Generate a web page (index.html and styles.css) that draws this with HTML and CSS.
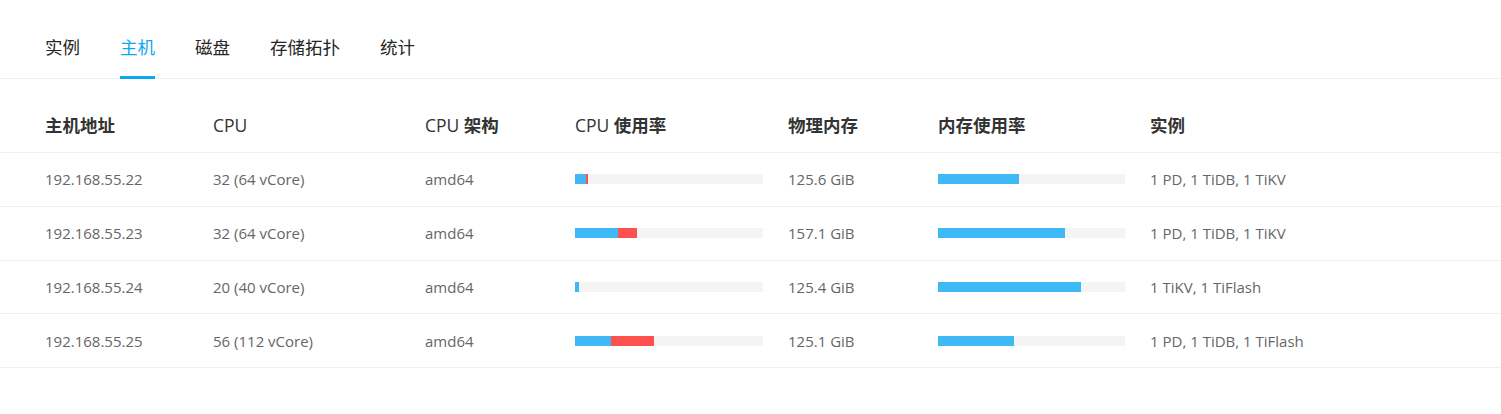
FILE: index.html
```html
<!DOCTYPE html>
<html lang="zh-CN">
<head>
<meta charset="utf-8">
<title>主机</title>
<link rel="stylesheet" href="styles.css">
</head>
<body>
<div class="tabs">
  <div class="tab">实例</div>
  <div class="tab active">主机</div>
  <div class="tab">磁盘</div>
  <div class="tab">存储拓扑</div>
  <div class="tab">统计</div>
</div>
<div class="table">
  <div class="row head">
    <div class="cell"><b>主机地址</b></div>
    <div class="cell">CPU</div>
    <div class="cell">CPU <b>架构</b></div>
    <div class="cell">CPU <b>使用率</b></div>
    <div class="cell"><b>物理内存</b></div>
    <div class="cell"><b>内存使用率</b></div>
    <div class="cell"><b>实例</b></div>
  </div>
  <div class="row">
    <div class="cell">192.168.55.22</div>
    <div class="cell">32 (64 vCore)</div>
    <div class="cell">amd64</div>
    <div class="cell"><div class="bar"><span class="blue" style="width:11px"></span><span class="red" style="width:2px"></span></div></div>
    <div class="cell">125.6 GiB</div>
    <div class="cell"><div class="bar mem"><span class="blue" style="width:81px"></span></div></div>
    <div class="cell">1 PD, 1 TiDB, 1 TiKV</div>
  </div>
  <div class="row">
    <div class="cell">192.168.55.23</div>
    <div class="cell">32 (64 vCore)</div>
    <div class="cell">amd64</div>
    <div class="cell"><div class="bar"><span class="blue" style="width:43px"></span><span class="red" style="width:19px"></span></div></div>
    <div class="cell">157.1 GiB</div>
    <div class="cell"><div class="bar mem"><span class="blue" style="width:127px"></span></div></div>
    <div class="cell">1 PD, 1 TiDB, 1 TiKV</div>
  </div>
  <div class="row">
    <div class="cell">192.168.55.24</div>
    <div class="cell">20 (40 vCore)</div>
    <div class="cell">amd64</div>
    <div class="cell"><div class="bar"><span class="blue" style="width:4px"></span></div></div>
    <div class="cell">125.4 GiB</div>
    <div class="cell"><div class="bar mem"><span class="blue" style="width:143px"></span></div></div>
    <div class="cell">1 TiKV, 1 TiFlash</div>
  </div>
  <div class="row">
    <div class="cell">192.168.55.25</div>
    <div class="cell">56 (112 vCore)</div>
    <div class="cell">amd64</div>
    <div class="cell"><div class="bar"><span class="blue" style="width:36px"></span><span class="red" style="width:43px"></span></div></div>
    <div class="cell">125.1 GiB</div>
    <div class="cell"><div class="bar mem"><span class="blue" style="width:76px"></span></div></div>
    <div class="cell">1 PD, 1 TiDB, 1 TiFlash</div>
  </div>
</div>
</body>
</html>
```
FILE: styles.css
```css
* { box-sizing: border-box; }
html, body { margin: 0; padding: 0; background: #fff; }
body {
  font-family: "Open Sans", "Noto Sans CJK SC", sans-serif;
  color: #333;
}
.tabs {
  display: flex;
  gap: 40px;
  padding-left: 45px;
  height: 79px;
  border-bottom: 1px solid #efefef;
}
.tab {
  position: relative;
  font-size: 17.5px;
  line-height: 24px;
  padding-top: 35px;
  color: #262626;
}
.tab.active { color: #0ca6f2; }
.tab.active::after {
  content: "";
  position: absolute;
  left: 0; right: 0;
  bottom: -1px;
  height: 3px;
  background: #0ca6f2;
}
.table { margin-top: 19px; }
.row {
  display: grid;
  grid-template-columns: 168px 212px 150px 213px 150px 212px 1fr;
  align-items: center;
  padding-left: 45px;
  height: 53.75px;
  border-bottom: 1px solid #efefef;
  font-size: 15px;
  color: #666;
}
.row.head {
  height: 55px;
  font-size: 17.5px;
  color: #333;
}
.row.head b { font-weight: 700; }
.cell { white-space: nowrap; line-height: 22px; }
.bar {
  display: flex;
  width: 188px;
  height: 10px;
  background: #f4f4f4;
}
.bar.mem { width: 187px; }
.bar span { display: block; height: 100%; }
.blue { background: #3fb9f6; }
.red { background: #ff5050; }
```
